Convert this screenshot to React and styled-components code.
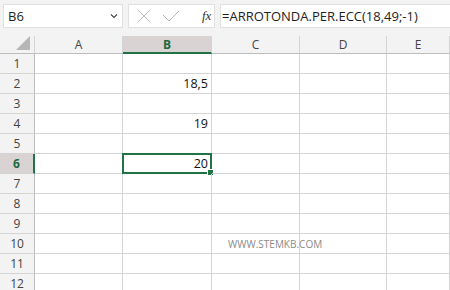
import React from "react";
import styled, { createGlobalStyle } from "styled-components";

const Global = createGlobalStyle`
  html, body { margin: 0; padding: 0; background: #f3f3f3; }
  body { font-family: "Open Sans", "Noto Sans", sans-serif; overflow: hidden; }
`;

const Page = styled.div`
  width: 450px;
  height: 290px;
  background: #f3f3f3;
  overflow: hidden;
`;

const Toolbar = styled.div`
  display: flex;
  align-items: stretch;
  height: 24px;
  padding: 4px 0 0 3px;
  gap: 5px;
`;

const NameBox = styled.div`
  width: 120px;
  background: #fff;
  border: 1px solid #e1e1e1;
  box-sizing: border-box;
  display: flex;
  align-items: center;
  justify-content: space-between;
  padding: 0 4px 0 4px;
  font-size: 13px;
  color: #222;
`;

const IconBox = styled.div`
  width: 87px;
  background: #fff;
  border: 1px solid #e1e1e1;
  box-sizing: border-box;
  display: flex;
  align-items: center;
  padding: 0 0 0 8px;
  gap: 11px;
`;

const Fx = styled.span`
  font-family: "Liberation Serif", serif;
  font-style: italic;
  font-size: 13px;
  color: #333;
  margin-left: 11px;
`;

const FormulaInput = styled.div`
  flex: 1;
  background: #fff;
  border: 1px solid #e1e1e1;
  border-right: none;
  box-sizing: border-box;
  display: flex;
  align-items: center;
  padding-left: 1px;
  font-size: 13px;
  color: #222;
  white-space: nowrap;
`;

const Sheet = styled.div`
  margin-top: 8px;
  display: grid;
  grid-template-columns: 35px 88px 89px 88px 87px 1fr;
  grid-auto-rows: 20px;
  grid-template-rows: 18px;
  background: #fff;
`;

const Corner = styled.div`
  background: #f3f3f3;
  border-right: 1px solid #d4d4d4;
  border-bottom: 1px solid #bdbdbd;
  box-sizing: border-box;
  position: relative;
`;

const Triangle = styled.div`
  position: absolute;
  right: 4px;
  bottom: 3px;
  width: 0;
  height: 0;
  border-left: 14px solid transparent;
  border-bottom: 14px solid #b6b6b6;
`;

const ColHead = styled.div`
  background: ${p => (p.$sel ? "#dad3d3" : "#f3f3f3")};
  border-right: 1px solid #d4d4d4;
  border-bottom: ${p => (p.$sel ? "2px solid #217346" : "1px solid #bdbdbd")};
  box-sizing: border-box;
  display: flex;
  align-items: center;
  justify-content: center;
  font-size: 12px;
  color: ${p => (p.$sel ? "#1d6b3f" : "#444")};
  font-weight: ${p => (p.$sel ? 700 : 400)};
`;

const RowHead = styled.div`
  background: ${p => (p.$sel ? "#dad3d3" : "#f3f3f3")};
  border-right: ${p => (p.$sel ? "2px solid #217346" : "1px solid #bdbdbd")};
  border-bottom: 1px solid #d4d4d4;
  box-sizing: border-box;
  display: flex;
  align-items: center;
  justify-content: center;
  font-size: 12px;
  color: ${p => (p.$sel ? "#1d6b3f" : "#444")};
  font-weight: ${p => (p.$sel ? 700 : 400)};
`;

const Cell = styled.div`
  border-right: 1px solid #d4d4d4;
  border-bottom: 1px solid #d4d4d4;
  box-sizing: border-box;
  display: flex;
  align-items: flex-end;
  justify-content: flex-end;
  padding: 0 3px 1px 0;
  font-size: 12.5px;
  color: #111;
  position: relative;
  white-space: nowrap;
  overflow: visible;
`;

const Selection = styled.div`
  position: absolute;
  left: -1px;
  top: -1px;
  right: -1px;
  bottom: -1px;
  border: 2px solid #217346;
  pointer-events: none;
`;

const Handle = styled.div`
  position: absolute;
  right: -3px;
  bottom: -3px;
  width: 5px;
  height: 5px;
  background: #217346;
  border: 1px solid #fff;
  border-right: none;
  border-bottom: none;
`;

const Watermark = styled.span`
  position: absolute;
  left: 16px;
  top: 3px;
  font-size: 10px;
  color: #8a8a8a;
  font-family: "Open Sans", "Noto Sans", sans-serif;
`;

const cols = ["A", "B", "C", "D", "E"];
const values = { 2: "18,5", 4: "19", 6: "20" };

export default function App() {
  const rows = [];
  for (let r = 1; r <= 12; r++) {
    rows.push(
      <React.Fragment key={r}>
        <RowHead $sel={r === 6}>{r}</RowHead>
        {cols.map(c => (
          <Cell key={c}>
            {c === "B" && values[r]}
            {c === "B" && r === 6 && (
              <Selection>
                <Handle />
              </Selection>
            )}
            {c === "C" && r === 10 && <Watermark>WWW.STEMKB.COM</Watermark>}
          </Cell>
        ))}
      </React.Fragment>
    );
  }
  return (
    <Page>
      <Global />
      <Toolbar>
        <NameBox>
          <span>B6</span>
          <svg width="8" height="6" viewBox="0 0 8 6">
            <path d="M1 1.5 L4 4.5 L7 1.5" fill="none" stroke="#444" strokeWidth="1.1" />
          </svg>
        </NameBox>
        <IconBox>
          <svg width="14" height="14" viewBox="0 0 14 14">
            <path d="M1 1 L13 13 M13 1 L1 13" stroke="#b8b8b8" strokeWidth="1" fill="none" />
          </svg>
          <svg width="18" height="14" viewBox="0 0 18 14">
            <path d="M1 6 L7 12 L17 2" stroke="#b8b8b8" strokeWidth="1" fill="none" />
          </svg>
          <Fx>fx</Fx>
        </IconBox>
        <FormulaInput>=ARROTONDA.PER.ECC(18,49;-1)</FormulaInput>
      </Toolbar>
      <Sheet>
        <Corner>
          <Triangle />
        </Corner>
        {cols.map(c => (
          <ColHead key={c} $sel={c === "B"}>
            {c}
          </ColHead>
        ))}
        {rows}
      </Sheet>
    </Page>
  );
}
